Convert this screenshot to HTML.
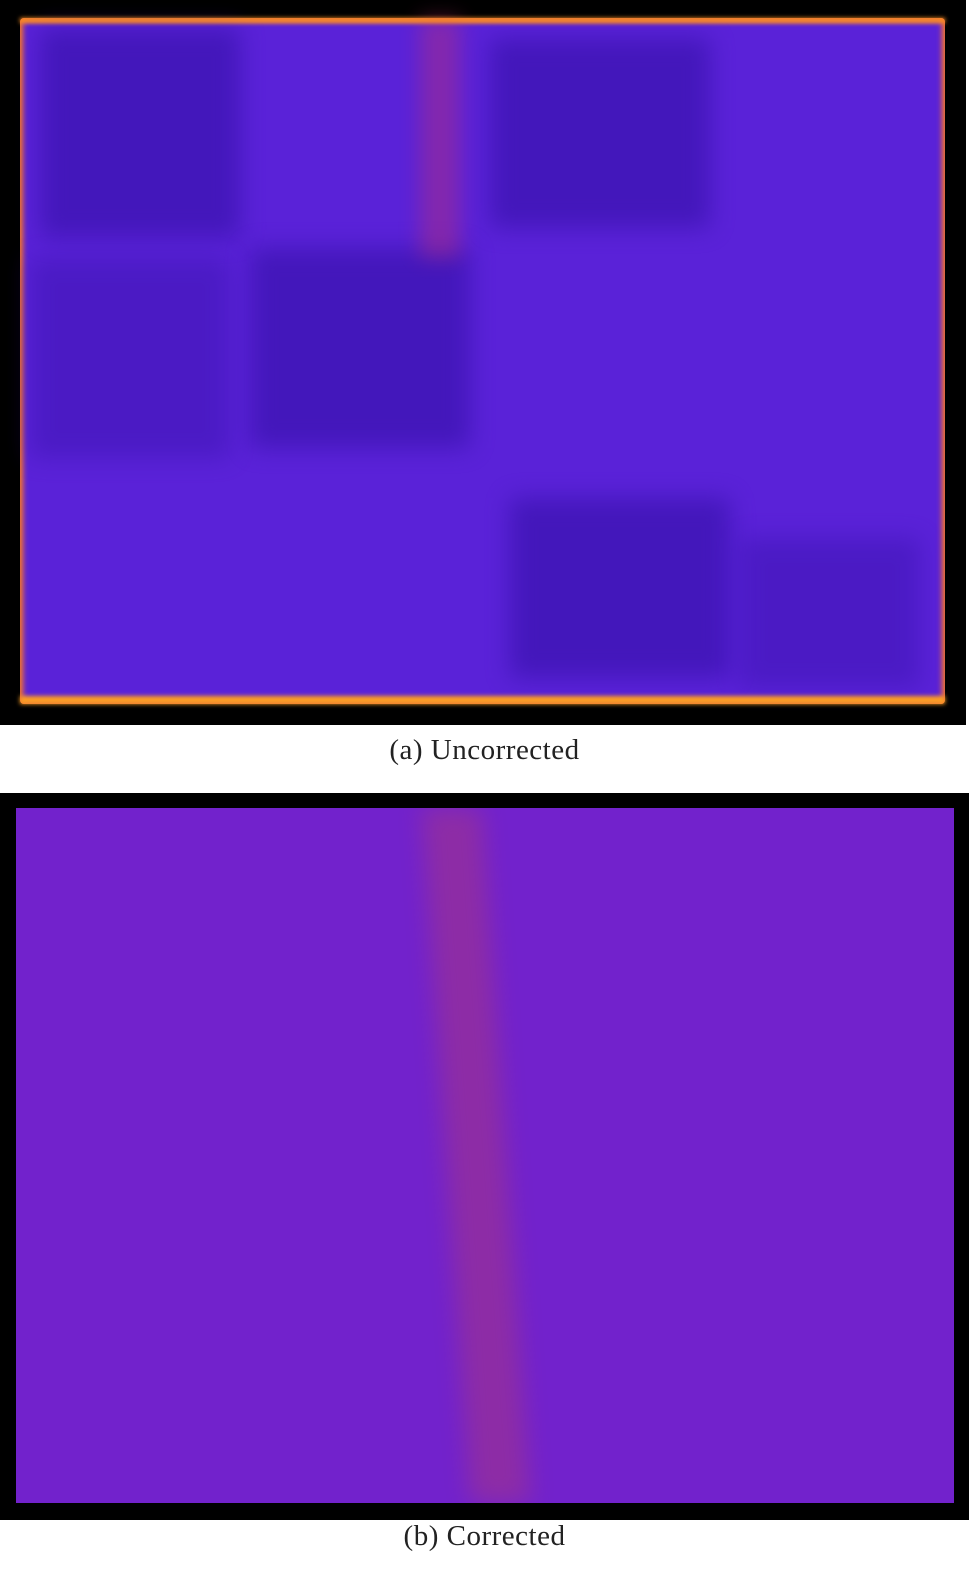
<!DOCTYPE html><html><head><style>
body{margin:0;width:969px;height:1574px;background:#fff;position:relative;overflow:hidden;font-family:"Liberation Serif",serif}
.f{position:absolute;background:#000}
.p{position:absolute}
.cap{position:absolute;width:969px;text-align:center;font-size:29px;color:#222;letter-spacing:0.5px}
.b{position:absolute;background:#3510a8;opacity:.6;filter:blur(12px)}
</style></head><body>
<div class="f" style="left:0;top:0;width:966px;height:725px"></div>
<div class="p" style="left:20px;top:18px;width:925px;height:686px;background:#5a22d8;box-shadow:inset 0 0 6px 3px #ff7a20;border-radius:4px">
<div class="b" style="left:20px;top:10px;width:200px;height:210px"></div>
<div class="b" style="left:470px;top:20px;width:220px;height:190px"></div>
<div class="b" style="left:230px;top:230px;width:220px;height:200px"></div>
<div class="b" style="left:10px;top:240px;width:200px;height:200px;opacity:.4"></div>
<div class="b" style="left:490px;top:480px;width:220px;height:180px"></div>
<div class="b" style="left:720px;top:520px;width:180px;height:150px;opacity:.4"></div>
<div style="position:absolute;left:400px;top:0;width:40px;height:240px;background:#c03070;opacity:.4;filter:blur(10px)"></div>
<div style="position:absolute;left:0;bottom:0;width:100%;height:8px;background:#ffa020;filter:blur(2px)"></div>
<div style="position:absolute;left:0;top:0;width:100%;height:5px;background:#ff9020;filter:blur(2px)"></div>
</div>
<div class="cap" style="top:734px">(a) Uncorrected</div>
<div class="f" style="left:0;top:793px;width:969px;height:727px"></div>
<div class="p" style="left:16px;top:808px;width:938px;height:695px;background:#7222cc;overflow:hidden">
<div style="position:absolute;left:430px;top:0;width:60px;height:695px;background:#c04060;opacity:.35;filter:blur(12px);transform:skewX(4deg)"></div>
</div>
<div class="cap" style="top:1520px">(b) Corrected</div>
</body></html>
